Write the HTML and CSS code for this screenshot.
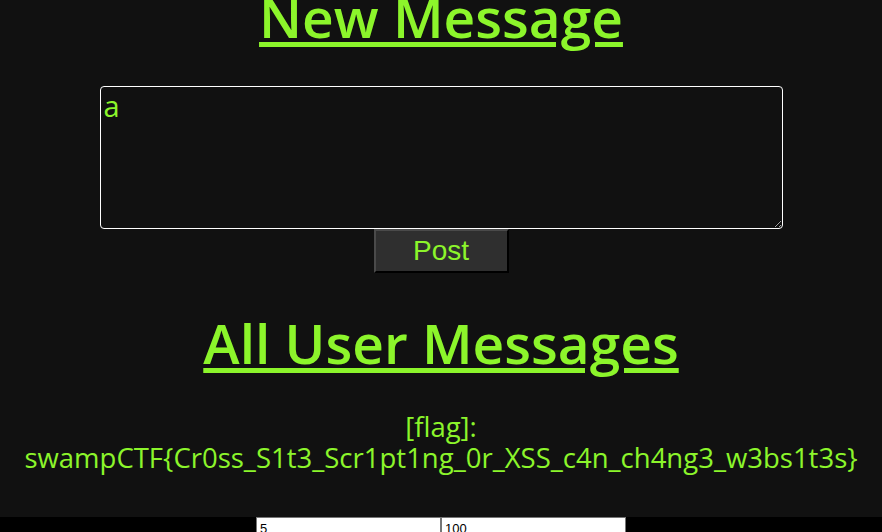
FILE: index.html
```html
<!DOCTYPE html>
<html lang="en">
<head>
<meta charset="utf-8">
<title>Messages</title>
<link rel="stylesheet" href="styles.css">
</head>
<body>
<main class="page">
  <h1 class="title title-top">New Message</h1>
  <form class="composer">
    <textarea class="message-box" autofocus>a</textarea>
    <button type="button" class="post-btn">Post</button>
  </form>
  <h1 class="title title-all">All User Messages</h1>
  <div class="messages">
    <p class="message">[flag]:<br>swampCTF{Cr0ss_S1t3_Scr1pt1ng_0r_XSS_c4n_ch4ng3_w3bs1t3s}</p>
  </div>
</main>
<footer class="footer">
  <input class="field" type="text" value="5">
  <input class="field" type="text" value="100">
</footer>
<script>
  var t = document.querySelector('.message-box');
  t.focus();
  t.setSelectionRange(1, 1);
</script>
</body>
</html>
```

FILE: styles.css
```css
html, body {
  margin: 0;
  padding: 0;
  background: #111111;
}

body {
  font-family: "Open Sans", "Noto Sans", sans-serif;
  color: #8cf52b;
}

.page {
  display: flex;
  flex-direction: column;
  align-items: center;
}

.title {
  margin: 0;
  font-size: 55px;
  font-weight: 600;
  line-height: 34px;
  text-decoration: underline;
  text-decoration-thickness: 5px;
  text-underline-offset: 4px;
  text-align: center;
}

.title-top {
  margin-top: 0;
}

.title-all {
  margin-top: 53px;
}

.composer {
  display: flex;
  flex-direction: column;
  align-items: center;
  margin-top: 52px;
}

.message-box {
  box-sizing: border-box;
  width: 683px;
  height: 143px;
  margin: 0;
  padding: 2px 3px;
  background: #111111;
  color: #8cf52b;
  caret-color: #8cf52b;
  border: 1px solid #ffffff;
  border-radius: 4px;
  font-family: "Open Sans", "Noto Sans", sans-serif;
  font-size: 29px;
  line-height: 34px;
  outline: none;
  resize: vertical;
}

.post-btn {
  box-sizing: border-box;
  width: 135px;
  height: 44px;
  margin: 0;
  padding: 0;
  background: #2f2f2f;
  color: #8cf52b;
  border: 2px solid;
  border-color: #4a4a4a #000000 #000000 #4a4a4a;
  font-family: "Liberation Sans", Arial, sans-serif;
  font-size: 28px;
  cursor: pointer;
}

.messages {
  margin-top: 51px;
  width: 100%;
}

.message {
  margin: 0 0 44px;
  font-size: 27.5px;
  line-height: 31px;
  text-align: center;
}

.footer {
  display: flex;
  justify-content: center;
  background: #000000;
  padding: 0 0 4px;
}

.field {
  box-sizing: border-box;
  width: 185px;
  height: 22px;
  margin: 0;
  padding: 0 3px;
  border: 1px solid #767676;
  background: #ffffff;
  color: #000000;
  font-family: "Liberation Sans", Arial, sans-serif;
  font-size: 13px;
}
```
